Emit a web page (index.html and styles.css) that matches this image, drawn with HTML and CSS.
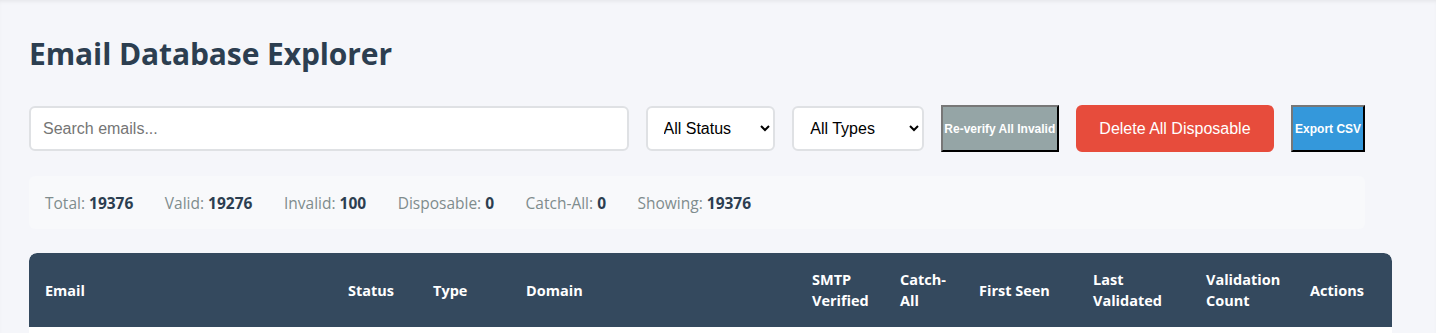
FILE: index.html
```html
<!DOCTYPE html>
<html lang="en">
<head>
    <meta charset="UTF-8">
    <meta name="viewport" content="width=device-width, initial-scale=1.0">
    <title>Email Database Explorer</title>
    <link rel="stylesheet" href="styles.css">
</head>
<body>

    <div class="page">
        <div class="container">
            <h1>Email Database Explorer</h1>

            <div class="toolbar">
                <input type="text" class="search-input" placeholder="Search emails...">
                <select class="filter-select">
                    <option>All Status</option>
                    <option>Valid</option>
                    <option>Invalid</option>
                </select>
                <select class="filter-select">
                    <option>All Types</option>
                    <option>Disposable</option>
                    <option>Catch-All</option>
                </select>
                <button class="btn-plain btn-grey">Re-verify All Invalid</button>
                <button class="btn-danger">Delete All Disposable</button>
                <button class="btn-plain btn-blue">Export CSV</button>
            </div>

            <div class="stats">
                <span class="stat">Total: <strong>19376</strong></span>
                <span class="stat">Valid: <strong>19276</strong></span>
                <span class="stat">Invalid: <strong>100</strong></span>
                <span class="stat">Disposable: <strong>0</strong></span>
                <span class="stat">Catch-All: <strong>0</strong></span>
                <span class="stat">Showing: <strong>19376</strong></span>
            </div>

            <table class="email-table">
                <thead>
                    <tr>
                        <th class="col-email">Email</th>
                        <th class="col-status">Status</th>
                        <th class="col-type">Type</th>
                        <th class="col-domain">Domain</th>
                        <th class="col-smtp">SMTP Verified</th>
                        <th class="col-catch">Catch-All</th>
                        <th class="col-first">First Seen</th>
                        <th class="col-last">Last Validated</th>
                        <th class="col-count">Validation Count</th>
                        <th class="col-actions">Actions</th>
                    </tr>
                </thead>
                <tbody>
                    <tr><td colspan="10"></td></tr>
                </tbody>
            </table>
        </div>
    </div>

</body>
</html>
```

FILE: styles.css
```css
:root {
    --background: #f5f6fa;
    --text: #2c3e50;
    --text-light: #7f8c8d;
    --border: #dfe1e4;
    --dark: #34495e;
    --danger: #e74c3c;
    --grey: #95a5a6;
    --blue: #3498db;
}

* {
    margin: 0;
    padding: 0;
    box-sizing: border-box;
}

body {
    background-color: var(--background);
    color: var(--text);
    font-family: 'Open Sans', 'Noto Sans', sans-serif;
    overflow: hidden;
}

.page {
    box-shadow: inset 0 3px 4px -2px rgba(0, 0, 0, 0.08);
    min-height: 100vh;
    padding: 0 29px;
}

.container {
    width: 1336px;
}

h1 {
    font-size: 30px;
    font-weight: 700;
    color: var(--text);
    padding-top: 34px;
    line-height: 40px;
    margin-bottom: 31px;
    letter-spacing: -0.1px;
}

.toolbar {
    display: flex;
    align-items: center;
    gap: 17px;
    margin-bottom: 24px;
}

.search-input {
    width: 601px;
    height: 45px;
    padding: 0 12px;
    border: 2px solid var(--border);
    border-radius: 6px;
    font-family: 'Liberation Sans', Arial, sans-serif;
    font-size: 16px;
    background: #fff;
    color: #222;
}

.search-input::placeholder {
    color: #757575;
}

.filter-select {
    width: 130px;
    height: 45px;
    padding: 0 12px;
    border: 2px solid var(--border);
    border-radius: 6px;
    font-family: 'Liberation Sans', Arial, sans-serif;
    font-size: 16px;
    background: #fff;
    color: #000;
}

.filter-select + .filter-select {
    width: 132px;
}

.btn-plain {
    height: 47px;
    border: 2px outset #222;
    border-color: #777 #111 #111 #777;
    color: #fff;
    font-family: 'Liberation Sans', Arial, sans-serif;
    font-size: 12px;
    font-weight: 700;
    padding: 0 1px;
}

.btn-grey {
    width: 118px;
    background: var(--grey);
}

.btn-blue {
    width: 74px;
    background: var(--blue);
}

.btn-danger {
    width: 199px;
    height: 47px;
    background: var(--danger);
    color: #fff;
    border: none;
    border-radius: 6px;
    font-family: 'Liberation Sans', Arial, sans-serif;
    font-size: 16px;
}

.stats {
    display: flex;
    gap: 31.5px;
    background: #f8f9fb;
    border-radius: 6px;
    padding: 0 16px;
    height: 53px;
    align-items: center;
    font-size: 15.5px;
    color: var(--text-light);
    margin-bottom: 24px;
}

.stat strong {
    color: var(--text);
    font-weight: 700;
}

.email-table {
    width: 1363px;
    border-collapse: separate;
    border-spacing: 0;
    table-layout: fixed;
    background: #fff;
    border-radius: 8px;
    overflow: hidden;
}

.email-table th {
    background: var(--dark);
    color: #fff;
    font-size: 14.5px;
    font-weight: 700;
    text-align: left;
    padding: 16px;
    line-height: 21px;
    vertical-align: middle;
}

.email-table th:first-child {
    border-top-left-radius: 8px;
}

.email-table th:last-child {
    border-top-right-radius: 8px;
}

.email-table td {
    height: 40px;
    background: #fff;
}

.col-email { width: 303px; }
.col-status { width: 85px; }
.col-type { width: 93px; }
.col-domain { width: 286px; }
.col-smtp { width: 88px; }
.col-catch { width: 79px; }
.col-first { width: 114px; }
.col-last { width: 113px; }
.col-count { width: 104px; }
.col-actions { width: 98px; }
```
